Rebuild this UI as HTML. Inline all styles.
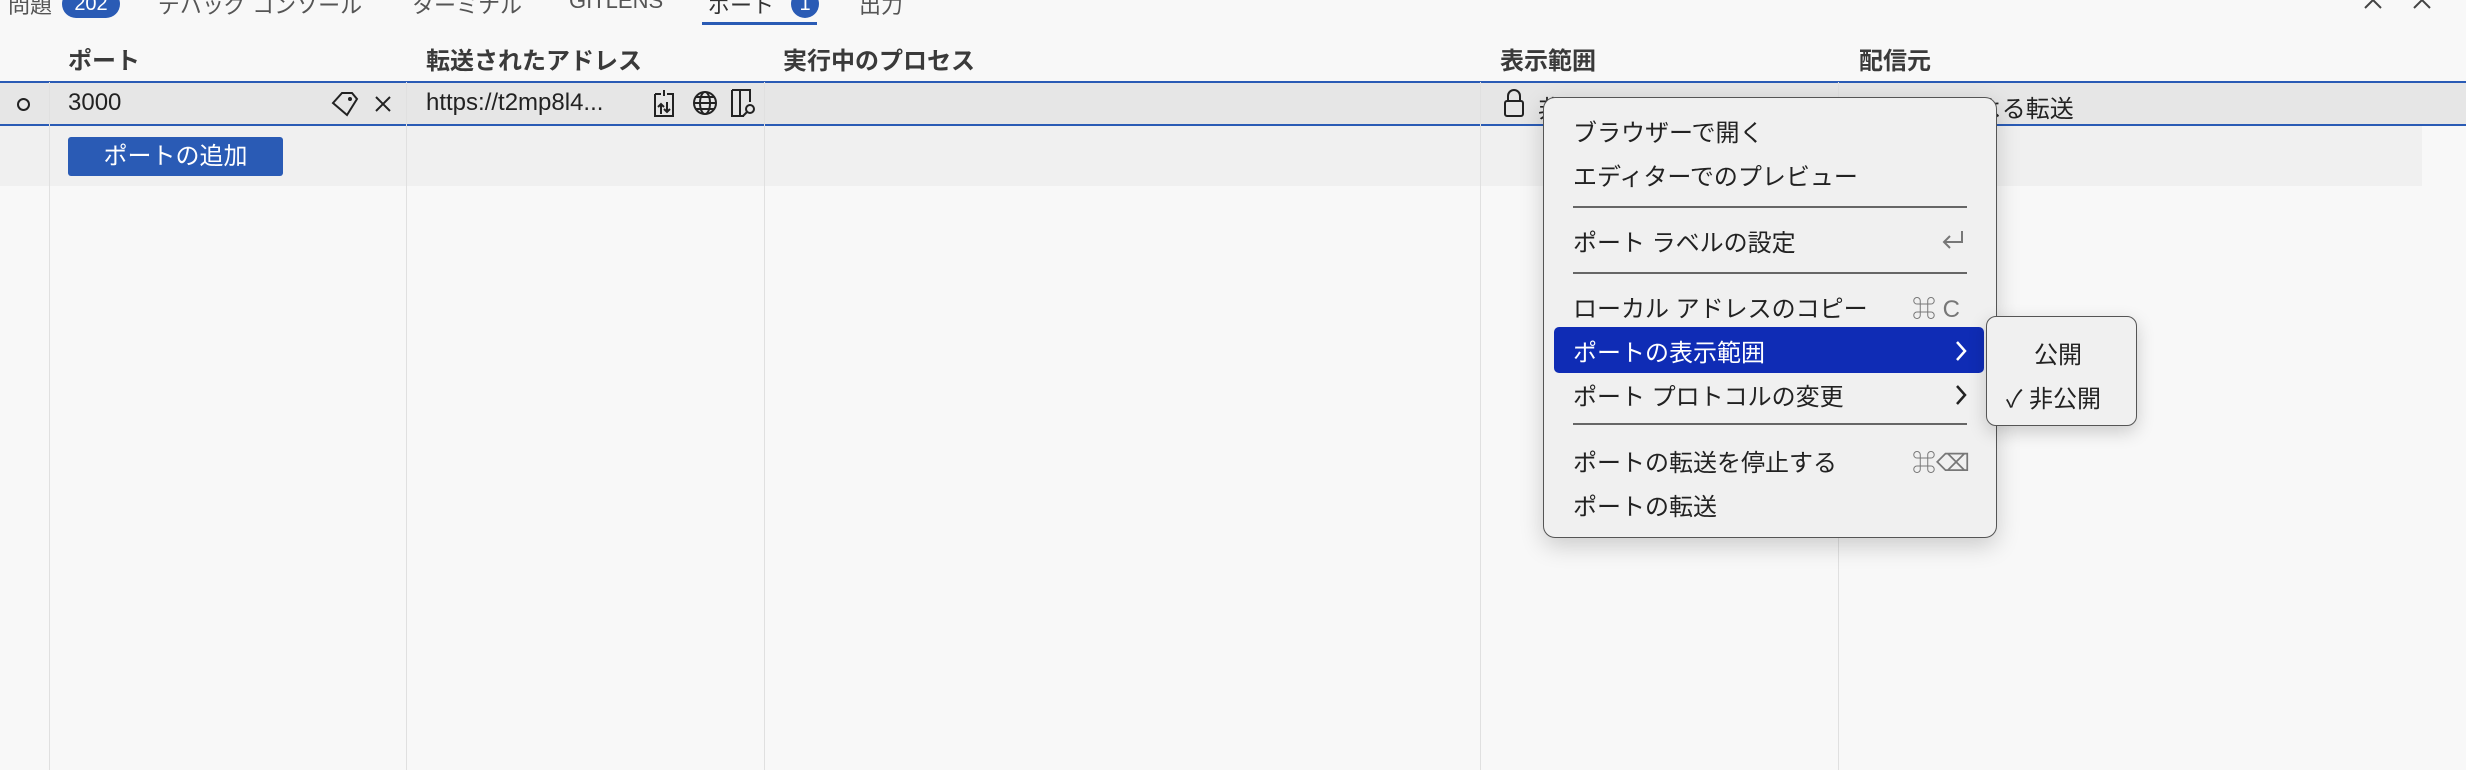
<!DOCTYPE html>
<html><head><meta charset="utf-8"><style>
*{margin:0;padding:0;box-sizing:border-box}
body{width:2466px;height:770px;background:#f8f8f8;position:relative;overflow:hidden;font-family:"Liberation Sans","Noto Sans CJK JP",sans-serif;color:#333;font-size:24px}
.a{position:absolute;white-space:nowrap}
.t{font-size:22px;top:-12px;color:#555}
.badge{position:absolute;background:#2a5bb5;color:#fff;border-radius:14px;font-size:20px;text-align:center}
.vl{position:absolute;top:82px;bottom:0;width:1px;background:#e0e0e0}
.hd{font-weight:bold;color:#3a3a3a;top:41px}
.menu{position:absolute;left:1543px;top:97px;width:454px;height:441px;background:#f0f0f0;border:1.5px solid #555;border-radius:12px;box-shadow:0 8px 24px rgba(0,0,0,.18)}
.mi{position:absolute;left:29px;color:#222;font-size:24px}
.sep{position:absolute;left:29px;width:394px;height:2px;background:#666}
.sc{position:absolute;color:#777;font-size:24px}
</style></head><body>
<!-- tabs -->
<div class="a t" style="left:8px">問題</div>
<div class="badge" style="left:62px;top:-10px;width:58px;height:28px;line-height:28px">202</div>
<div class="a t" style="left:158px">デバッグ コンソール</div>
<div class="a t" style="left:412px">ターミナル</div>
<div class="a t" style="left:569px">GITLENS</div>
<div class="a t" style="left:708px;color:#333">ポート</div>
<div class="badge" style="left:791px;top:-10px;width:28px;height:28px;line-height:28px">1</div>
<div class="a t" style="left:859px">出力</div>
<div class="a" style="left:702px;top:22px;width:115px;height:3px;background:#2a5bb5"></div>
<svg class="a" style="left:2362px;top:0" width="22" height="10" viewBox="0 0 22 10"><path d="M3 8 L11 0 19 8" fill="none" stroke="#444" stroke-width="2"/></svg>
<svg class="a" style="left:2412px;top:0" width="20" height="10" viewBox="0 0 20 10"><path d="M2 -8 L18 8 M18 -8 L2 8" fill="none" stroke="#444" stroke-width="2"/></svg>
<!-- header -->
<div class="a hd" style="left:68px">ポート</div>
<div class="a hd" style="left:426px">転送されたアドレス</div>
<div class="a hd" style="left:783px">実行中のプロセス</div>
<div class="a hd" style="left:1500px">表示範囲</div>
<div class="a hd" style="left:1859px">配信元</div>
<!-- rows -->
<div class="a" style="left:0;top:126px;width:2422px;height:60px;background:#f0f0f0"></div>
<div class="a" style="left:0;top:82px;width:2466px;height:44px;background:#e6e6e6"></div>
<div class="a" style="left:0;top:81px;width:2466px;height:2px;background:#2a5bb5"></div>
<div class="a" style="left:0;top:124px;width:2466px;height:2px;background:#2a5bb5"></div>
<div class="vl" style="left:49px"></div>
<div class="vl" style="left:406px"></div>
<div class="vl" style="left:764px"></div>
<div class="vl" style="left:1480px"></div>
<div class="vl" style="left:1838px"></div>
<div class="a" style="left:17px;top:98px;width:13px;height:13px;border:2.5px solid #222;border-radius:50%"></div>
<div class="a" style="left:68px;top:89px;color:#222">3000</div>
<svg class="a" style="left:330px;top:90px" width="30" height="28" viewBox="0 0 30 28"><path d="M3 13 L12 3 H22 L27 9 L17 25 Z" fill="none" stroke="#222" stroke-width="2"/><circle cx="20" cy="9" r="2" fill="#222"/></svg>
<svg class="a" style="left:374px;top:95px" width="18" height="18" viewBox="0 0 18 18"><path d="M2 2 L16 16 M16 2 L2 16" stroke="#222" stroke-width="2"/></svg>
<div class="a" style="left:426px;top:89px;color:#222">https://t2mp8l4...</div>
<svg class="a" style="left:652px;top:88px" width="24" height="30" viewBox="0 0 24 30"><path d="M3 6 H9 M15 6 H21 V28 H3 V6 M12 2 V8 M9 16 L9 26 M6 19 L9 16 12 19 M15 14 V24 M12 21 L15 24 18 21" fill="none" stroke="#222" stroke-width="2"/></svg>
<svg class="a" style="left:692px;top:90px" width="26" height="26" viewBox="0 0 26 26"><circle cx="13" cy="13" r="11" fill="none" stroke="#222" stroke-width="2"/><ellipse cx="13" cy="13" rx="5" ry="11" fill="none" stroke="#222" stroke-width="2"/><path d="M2 13 H24 M4 7 H22 M4 19 H22" stroke="#222" stroke-width="2"/></svg>
<svg class="a" style="left:730px;top:88px" width="28" height="30" viewBox="0 0 28 30"><path d="M2 2 H20 V14 M2 2 V28 H14 M10 2 V28" fill="none" stroke="#222" stroke-width="2"/><circle cx="20" cy="21" r="4" fill="none" stroke="#222" stroke-width="2"/><path d="M17 24 L13 28" stroke="#222" stroke-width="2"/></svg>
<svg class="a" style="left:1503px;top:88px" width="22" height="30" viewBox="0 0 22 30"><rect x="2" y="13" width="18" height="15" rx="2" fill="none" stroke="#222" stroke-width="2"/><path d="M5 13 V8 A6 6 0 0 1 17 8 V13" fill="none" stroke="#222" stroke-width="2"/></svg>
<div class="a" style="left:1538px;top:89px;color:#222">非公開</div>
<div class="a" style="left:1859px;top:89px;color:#222">ユーザーによる転送</div>
<div class="a" style="left:68px;top:137px;width:215px;height:39px;background:#2a5bb5;border-radius:3px;color:#fff;text-align:center;line-height:39px">ポートの追加</div>
<!-- menu -->
<div class="menu">
 <div class="mi" style="top:15px">ブラウザーで開く</div>
 <div class="mi" style="top:59px">エディターでのプレビュー</div>
 <div class="sep" style="top:108px"></div>
 <div class="mi" style="top:125px">ポート ラベルの設定</div>
 <svg class="a" style="left:396px;top:130px" width="26" height="26" viewBox="0 0 26 26"><path d="M22 3 V14 H4 M10 8 L4 14 10 20" fill="none" stroke="#777" stroke-width="2"/></svg>
 <div class="sep" style="top:174px"></div>
 <div class="mi" style="top:191px">ローカル アドレスのコピー</div>
 <div class="sc" style="left:368px;top:191px">⌘ C</div>
 <div class="a" style="left:10px;top:229px;width:430px;height:46px;background:#0f2cb5;border-radius:5px"></div>
 <div class="mi" style="top:235px;color:#fff">ポートの表示範囲</div>
 <svg class="a" style="left:410px;top:242px" width="14" height="22" viewBox="0 0 14 22"><path d="M3 2 L11 11 3 20" fill="none" stroke="#fff" stroke-width="2.5"/></svg>
 <div class="mi" style="top:279px">ポート プロトコルの変更</div>
 <svg class="a" style="left:410px;top:286px" width="14" height="22" viewBox="0 0 14 22"><path d="M3 2 L11 11 3 20" fill="none" stroke="#222" stroke-width="2.5"/></svg>
 <div class="sep" style="top:325px"></div>
 <div class="mi" style="top:345px">ポートの転送を停止する</div>
 <div class="sc" style="left:368px;top:345px">⌘⌫</div>
 <div class="mi" style="top:389px">ポートの転送</div>
</div>
<div class="a" style="left:1986px;top:316px;width:151px;height:110px;background:#f0f0f0;border:1.5px solid #555;border-radius:10px;box-shadow:0 6px 18px rgba(0,0,0,.18)"></div>
<div class="a" style="left:2034px;top:335px;color:#222">公開</div>
<div class="a" style="left:2006px;top:379px;color:#222">✓ 非公開</div>
</body></html>
